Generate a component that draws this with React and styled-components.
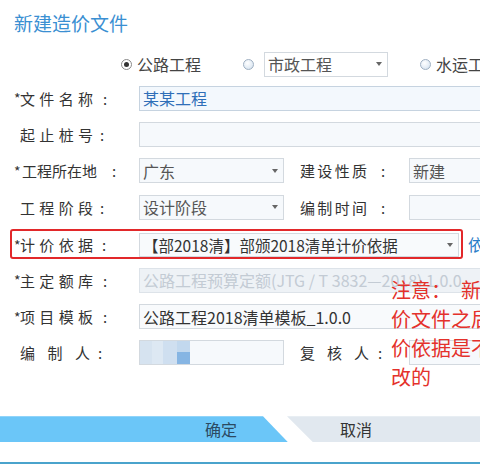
import React from "react";
import styled, { createGlobalStyle } from "styled-components";

const Global = createGlobalStyle`
  html, body { margin: 0; padding: 0; background: #fff; }
  body {
    font-family: "Noto Sans CJK SC", "Noto Sans", sans-serif;
    overflow: hidden;
  }
`;

const Page = styled.div`
  position: relative;
  width: 480px;
  height: 464px;
  box-sizing: border-box;
  overflow: hidden;
  display: flex;
  flex-direction: column;
  border-bottom: 2px solid #4aa3cc;
`;

const Title = styled.div`
  padding: 11px 0 0 14px;
  font-size: 19px;
  line-height: 23px;
  color: #3a8fd2;
`;

const TypeRow = styled.div`
  display: flex;
  align-items: center;
  height: 28px;
  margin-top: 16px;
  padding-left: 121px;
  white-space: nowrap;
`;

const TypeOption = styled.label`
  display: flex;
  align-items: center;
  flex: none;
  gap: ${(p) => p.$gap || 5}px;
  margin-right: ${(p) => p.$after || 0}px;
  font-size: 16px;
  color: #444;
`;

const Radio = styled.span`
  position: relative;
  flex: none;
  width: 11px;
  height: 11px;
  border-radius: 50%;
  box-sizing: border-box;
  border: 1px solid ${(p) => (p.$checked ? "#8a8a8a" : "#9fb0c2")};
  background: ${(p) =>
    p.$checked ? "#fff" : "radial-gradient(circle at 40% 35%, #fff 0%, #e3ecf5 60%, #c9d8e8 100%)"};
  &::after {
    content: "";
    display: ${(p) => (p.$checked ? "block" : "none")};
    position: absolute;
    left: 2px;
    top: 2px;
    width: 5px;
    height: 5px;
    border-radius: 50%;
    background: #333;
  }
`;

const Form = styled.div`
  display: flex;
  flex-direction: column;
  margin-top: 2px;
`;

const Row = styled.div`
  display: flex;
  align-items: center;
  height: 36.4px;
  padding-left: ${(p) => (p.$boxed ? 10 : 14)}px;
  white-space: nowrap;
`;

const Highlight = styled.div`
  display: flex;
  align-items: center;
  flex: none;
  border: 2px solid #e2282a;
  border-radius: 3px;
  padding: 2px 2px 0 2px;
  height: 30px;
  box-sizing: border-box;
`;

const LabelBox = styled.div`
  display: flex;
  align-items: center;
  flex: none;
  width: ${(p) => p.$width}px;
  font-size: 15px;
  color: #333;
`;

const Star = styled.span`
  flex: none;
  width: ${(p) => p.$w}px;
  font-size: 14px;
`;

/* label characters spread evenly across a fixed width */
const LabelChars = styled.span`
  display: flex;
  justify-content: space-between;
  flex: none;
  width: ${(p) => (p.$w ? `${p.$w}px` : "auto")};
`;

const Colon = styled.span`
  flex: none;
  margin-left: ${(p) => p.$gap}px;
`;

function Label({ text, required, side, width, gap = 8, starWidth = 6 }) {
  const left = side !== "right";
  return (
    <LabelBox $width={left ? 125 : 109}>
      {left && <Star $w={starWidth}>{required ? "*" : ""}</Star>}
      <LabelChars $w={width}>
        {[...text].map((c, i) => (
          <span key={i}>{c}</span>
        ))}
      </LabelChars>
      <Colon $gap={gap}>:</Colon>
    </LabelBox>
  );
}

const tones = {
  focus: { bg: "#f3f8fd", border: "#c6d3e0", color: "#2f6fb8" },
  plain: { bg: "#f6f9fc", border: "#d3d9df", color: "#555" },
  white: { bg: "#fff", border: "#d3d9df", color: "#555" },
  value: { bg: "#f8fafc", border: "#d3d9df", color: "#333" },
  disabled: { bg: "#eef2f6", border: "#dde3e9", color: "#c3cbd4" },
};

const Field = styled.div`
  display: flex;
  align-items: center;
  justify-content: space-between;
  flex: none;
  box-sizing: border-box;
  width: ${(p) => p.$w}px;
  height: ${(p) => p.$h || 25}px;
  padding: 0 5px 0 3px;
  border: 1px solid ${(p) => tones[p.$tone || "plain"].border};
  background: ${(p) => tones[p.$tone || "plain"].bg};
  color: ${(p) => tones[p.$tone || "plain"].color};
  font-size: ${(p) => p.$fs || 16}px;
  overflow: hidden;
  white-space: nowrap;
`;

const Caret = styled.span`
  flex: none;
  width: 0;
  height: 0;
  border-left: 3.5px solid transparent;
  border-right: 3.5px solid transparent;
  border-top: 4px solid #666;
`;

const Spacer = styled.span`
  flex: none;
  width: ${(p) => p.$w}px;
`;

const Link = styled.span`
  margin-left: 5px;
  font-size: 16px;
  color: #2a7dc8;
`;

/* pixelated name (privacy mosaic) */
const Mosaic = styled.div`
  display: flex;
  align-self: stretch;
  margin-left: -3px;
`;

const Tile = styled.span`
  display: flex;
  flex-direction: column;
  width: ${(p) => p.$w}px;
  background: ${(p) => p.$c};
`;

const TileLow = styled.span`
  margin-top: auto;
  height: 12px;
  background: #86b5e3;
`;

const Note = styled.div`
  position: absolute;
  left: 391px;
  top: 275px;
  font-size: 20px;
  line-height: 29px;
  color: #e4312b;
  white-space: pre;
`;

const ButtonBar = styled.div`
  display: flex;
  height: 26px;
  margin-top: 45px;
`;

const OkButton = styled.div`
  flex: none;
  width: 288px;
  display: flex;
  align-items: center;
  justify-content: flex-end;
  padding-right: 51px;
  box-sizing: border-box;
  background: #6bc6f8;
  clip-path: polygon(0 0, 263px 0, 100% 100%, 0 100%);
  font-size: 16px;
  color: #2c4a62;
`;

const CancelButton = styled.div`
  flex: none;
  width: 240px;
  margin-left: -1px;
  display: flex;
  align-items: center;
  padding-left: 53px;
  box-sizing: border-box;
  background: #e1e8ef;
  clip-path: polygon(0 0, 100% 0, 100% 100%, 26px 100%);
  font-size: 16px;
  color: #333;
`;

export default function App() {
  return (
    <>
      <Global />
      <Page>
        <Title>新建造价文件</Title>

        <TypeRow>
          <TypeOption $gap={5} $after={42}>
            <Radio $checked />
            公路工程
          </TypeOption>
          <TypeOption $gap={10} $after={32}>
            <Radio />
            <Field $w={124} $tone="white">
              市政工程
              <Caret />
            </Field>
          </TypeOption>
          <TypeOption $gap={5}>
            <Radio />
            水运工程
          </TypeOption>
        </TypeRow>

        <Form>
          <Row>
            <Label text="文件名称" required width={73} gap={10} />
            <Field $w={420} $tone="focus">某某工程</Field>
          </Row>

          <Row>
            <Label text="起止桩号" width={73} gap={7} />
            <Field $w={420} $tone="plain" />
          </Row>

          <Row>
            <Label text="工程所在地" required starWidth={8} gap={15} />
            <Field $w={145} $tone="plain">
              广东
              <Caret />
            </Field>
            <Spacer $w={16} />
            <Label text="建设性质" side="right" width={67} gap={14} />
            <Field $w={120} $tone="plain">新建</Field>
          </Row>

          <Row>
            <Label text="工程阶段" width={73} gap={7} />
            <Field $w={145} $tone="plain">
              设计阶段
              <Caret />
            </Field>
            <Spacer $w={16} />
            <Label text="编制时间" side="right" width={67} gap={14} />
            <Field $w={120} $tone="plain" />
          </Row>

          <Row $boxed>
            <Highlight>
              <Label text="计价依据" required width={73} gap={9} />
              <Field $w={320} $h={24} $fs={15.5} $tone="value">
                【部2018清】部颁2018清单计价依据
                <Caret />
              </Field>
            </Highlight>
            <Link>依据</Link>
          </Row>

          <Row>
            <Label text="主定额库" required width={73} gap={10} />
            <Field $w={420} $tone="disabled">
              公路工程预算定额(JTG / T 3832—2018) 1.0.0
            </Field>
          </Row>

          <Row>
            <Label text="项目模板" required width={73} gap={10} />
            <Field $w={420} $tone="value">公路工程2018清单模板_1.0.0</Field>
          </Row>

          <Row>
            <Label text="编制人" width={70} gap={8} />
            <Field $w={145} $tone="plain">
              <Mosaic>
                <Tile $w={12} $c="#d6e3f0" />
                <Tile $w={11} $c="#dde8f3" />
                <Tile $w={14} $c="#cfdff0" />
                <Tile $w={13} $c="#c2d8ee">
                  <TileLow />
                </Tile>
              </Mosaic>
            </Field>
            <Spacer $w={16} />
            <Label text="复核人" side="right" width={69} gap={9} />
            <Field $w={120} $tone="plain" />
          </Row>
        </Form>

        <ButtonBar>
          <OkButton>确定</OkButton>
          <CancelButton>取消</CancelButton>
        </ButtonBar>

        <Note>{"注意：\u2002新建造\n价文件之后，计\n价依据是不能修\n改的"}</Note>
      </Page>
    </>
  );
}
